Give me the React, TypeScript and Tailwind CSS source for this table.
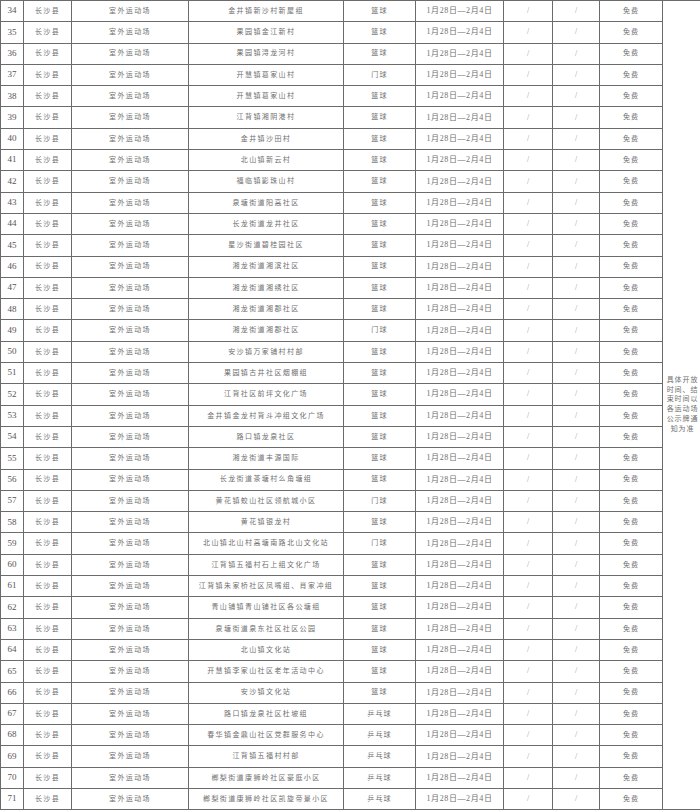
import React from 'react';

const rows: [number, string, string][] = [
  [34, '金井镇新沙村新屋组', '篮球'],
  [35, '果园镇金江新村', '篮球'],
  [36, '果园镇浔龙河村', '篮球'],
  [37, '开慧镇葛家山村', '门球'],
  [38, '开慧镇葛家山村', '篮球'],
  [39, '江背镇湘阴港村', '篮球'],
  [40, '金井镇沙田村', '篮球'],
  [41, '北山镇新云村', '篮球'],
  [42, '福临镇影珠山村', '篮球'],
  [43, '泉塘街道阳高社区', '篮球'],
  [44, '长龙街道龙井社区', '篮球'],
  [45, '星沙街道碧桂园社区', '篮球'],
  [46, '湘龙街道湘滨社区', '篮球'],
  [47, '湘龙街道湘绣社区', '篮球'],
  [48, '湘龙街道湘郡社区', '篮球'],
  [49, '湘龙街道湘郡社区', '门球'],
  [50, '安沙镇万家铺村村部', '篮球'],
  [51, '果园镇古井社区烟棚组', '篮球'],
  [52, '江背社区前坪文化广场', '篮球'],
  [53, '金井镇金龙村背斗冲组文化广场', '篮球'],
  [54, '路口镇龙泉社区', '篮球'],
  [55, '湘龙街道丰源国际', '篮球'],
  [56, '长龙街道茶塘村么角塘组', '篮球'],
  [57, '黄花镇蛟山社区领航城小区', '门球'],
  [58, '黄花镇银龙村', '篮球'],
  [59, '北山镇北山村高塘南路北山文化站', '门球'],
  [60, '江背镇五福村石上组文化广场', '篮球'],
  [61, '江背镇朱家桥社区凤嘴组、肖家冲组', '篮球'],
  [62, '青山铺镇青山铺社区各公塘组', '篮球'],
  [63, '泉塘街道泉东社区社区公园', '篮球'],
  [64, '北山镇文化站', '篮球'],
  [65, '开慧镇李家山社区老年活动中心', '篮球'],
  [66, '安沙镇文化站', '篮球'],
  [67, '路口镇龙泉社区杜坡组', '乒乓球'],
  [68, '春华镇金鼎山社区党群服务中心', '乒乓球'],
  [69, '江背镇五福村村部', '乒乓球'],
  [70, '榔梨街道康狮岭社区豪庭小区', '乒乓球'],
  [71, '榔梨街道康狮岭社区凯旋帝景小区', '乒乓球']
];

const note = ['具体开放', '时间、结', '束时间以', '各运动场', '公示牌通', '知为准'];

const cell = 'border border-[#6b6b6b] p-0 text-center align-middle whitespace-nowrap';

export default function App() {
  return (
    <div
      className="w-[700px] h-[811px] overflow-hidden bg-white text-[#707070]"
      style={{ fontFamily: '"Liberation Serif", "Noto Sans CJK SC", serif' }}
    >
      <table className="table-fixed border-collapse w-[702px]">
        <colgroup>
          <col className="w-[23px]" />
          <col className="w-[48px]" />
          <col className="w-[117px]" />
          <col className="w-[155px]" />
          <col className="w-[72px]" />
          <col className="w-[88px]" />
          <col className="w-[49px]" />
          <col className="w-[47px]" />
          <col className="w-[63px]" />
          <col className="w-[40px]" />
        </colgroup>
        <tbody>
          {rows.map(([no, place, sport], i) => (
            <tr key={no} className="h-[21.3px]">
              <td className={`${cell} text-[9px] text-[#555]`}>{no}</td>
              <td className={`${cell} text-[7px] tracking-[1.3px]`}>长沙县</td>
              <td className={`${cell} text-[7px] tracking-[1.4px]`}>室外运动场</td>
              <td className={`${cell} text-[7px] tracking-[1.4px]`}>{place}</td>
              <td className={`${cell} text-[7px] tracking-[1.2px]`}>{sport}</td>
              <td className={`${cell} text-[8px] tracking-[0.6px]`}>1月28日—2月4日</td>
              <td className={`${cell} text-[8px] text-[#999]`}>/</td>
              <td className={`${cell} text-[8px] text-[#999]`}>/</td>
              <td className={`${cell} text-[7px] tracking-[1px]`}>免费</td>
              {i === 0 && (
                <td rowSpan={rows.length} className={`${cell} text-[7px] tracking-[0.9px] leading-[9.7px]`}>
                  {note.map((line) => (
                    <div key={line}>{line}</div>
                  ))}
                </td>
              )}
            </tr>
          ))}
        </tbody>
      </table>
    </div>
  );
}
